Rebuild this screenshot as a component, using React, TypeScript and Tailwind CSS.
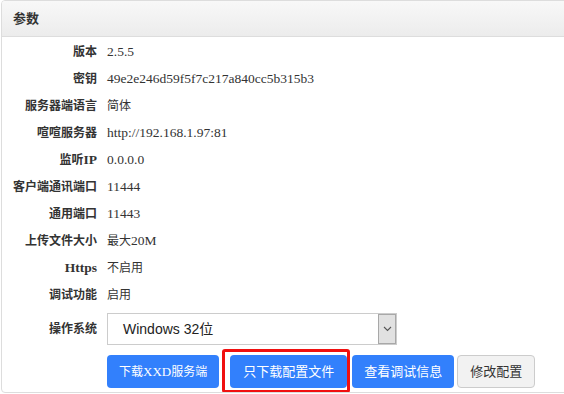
import React from "react";

const rows: [string, string][] = [
  ["版本", "2.5.5"],
  ["密钥", "49e2e246d59f5f7c217a840cc5b315b3"],
  ["服务器端语言", "简体"],
  ["喧喧服务器", "http://192.168.1.97:81"],
  ["监听IP", "0.0.0.0"],
  ["客户端通讯端口", "11444"],
  ["通用端口", "11443"],
  ["上传文件大小", "最大20M"],
  ["Https", "不启用"],
  ["调试功能", "启用"],
];

// CJK runs render a touch smaller than the latin text
function Mixed({ text }: { text: string }) {
  const parts = text.split(/([\u4e00-\u9fff]+)/).filter(Boolean);
  return (
    <>
      {parts.map((p, i) =>
        /[\u4e00-\u9fff]/.test(p) ? (
          <span key={i} className="text-[12px]">{p}</span>
        ) : (
          <span key={i}>{p}</span>
        )
      )}
    </>
  );
}

export default function App() {
  return (
    <div className="w-[564px] h-[394px] overflow-hidden bg-white pl-[1px] text-[13.5px] text-[#333] font-['Liberation_Serif','Noto_Sans_CJK_SC',serif]">
      <div className="w-[620px] border border-[#ddd] rounded-[4px] overflow-hidden">
        <div className="h-[36px] flex items-center px-[11px] border-b border-[#ddd] bg-gradient-to-b from-[#f8f8f8] to-[#ececec] font-bold text-[13px]">
          参数
        </div>

        <div className="pt-[1px] pb-[4px]">
          {rows.map(([k, v]) => (
            <div key={k} className="flex items-center h-[27px] leading-none">
              <div className="w-[95px] text-right font-bold">
                <Mixed text={k} />
              </div>
              <div className="ml-[10px]">
                <Mixed text={v} />
              </div>
            </div>
          ))}

          <div className="flex items-center mt-[5px] h-[32px]">
            <div className="w-[95px] text-right font-bold">
              <span className="text-[12px]">操作系统</span>
            </div>
            <div className="ml-[10px] w-[290px] h-[32px] flex items-center border border-[#ccc] bg-white">
              <span className="pl-[15px] text-[14px] text-[#222] font-['Liberation_Sans','Noto_Sans_CJK_SC',sans-serif]">
                Windows 32位
              </span>
              <div className="ml-auto h-full w-[18px] flex items-center justify-center bg-[#e1e1e1] border border-[#a8a8a8]">
                <svg width="9" height="6" viewBox="0 0 9 6" fill="none" stroke="#555" strokeWidth="1.1">
                  <path d="M1 1l3.5 3.5L8 1" />
                </svg>
              </div>
            </div>
          </div>

          <div className="flex items-center mt-[10px] h-[33px] pl-[105px] text-[13px]">
            <button className="h-[33px] px-[12px] rounded-[4px] bg-[#3280fc] text-white">
              <Mixed text="下载XXD服务端" />
            </button>
            <div className="relative ml-[11px]">
              <button className="h-[33px] px-[13px] rounded-[4px] bg-[#3280fc] text-white">
                只下载配置文件
              </button>
              <div className="absolute -left-[8px] -right-[3px] -top-[6px] -bottom-[5px] border-[3px] border-[#f01010] rounded-[3px]" />
            </div>
            <button className="ml-[5px] h-[33px] px-[12px] rounded-[4px] bg-[#3280fc] text-white">
              查看调试信息
            </button>
            <button className="ml-[3px] h-[33px] px-[12px] rounded-[4px] bg-[#f2f2f2] border border-[#ccc] text-[#333]">
              修改配置
            </button>
          </div>
        </div>
      </div>
    </div>
  );
}
